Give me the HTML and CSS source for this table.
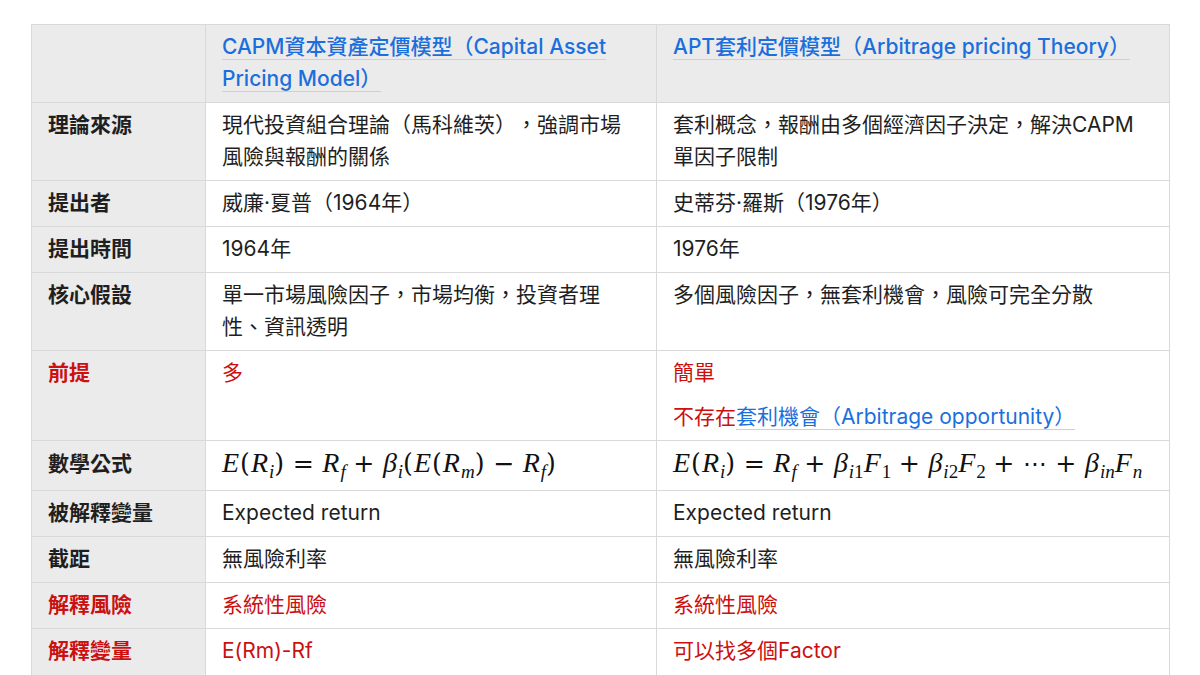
FILE: index.html
```html
<!DOCTYPE html>
<html lang="zh-Hant">
<head>
<meta charset="utf-8">
<title>CAPM vs APT</title>
<link rel="stylesheet" href="styles.css">
</head>
<body>
<div class="page">
<table class="cmp">
  <colgroup>
    <col class="c1"><col class="c2"><col class="c3">
  </colgroup>
  <thead>
    <tr>
      <th></th>
      <th><a class="lnk">CAPM資本資產定價模型（Capital Asset Pricing Model）</a></th>
      <th><a class="lnk">APT套利定價模型（Arbitrage pricing Theory）</a></th>
    </tr>
  </thead>
  <tbody>
    <tr>
      <th>理論來源</th>
      <td>現代投資組合理論（馬科維茨），強調市場風險與報酬的關係</td>
      <td>套利概念，報酬由多個經濟因子決定，解決CAPM單因子限制</td>
    </tr>
    <tr>
      <th>提出者</th>
      <td>威廉·夏普（1964年）</td>
      <td>史蒂芬·羅斯（1976年）</td>
    </tr>
    <tr>
      <th>提出時間</th>
      <td>1964年</td>
      <td>1976年</td>
    </tr>
    <tr>
      <th>核心假設</th>
      <td>單一市場風險因子，市場均衡，投資者理性、資訊透明</td>
      <td>多個風險因子，無套利機會，風險可完全分散</td>
    </tr>
    <tr>
      <th class="red">前提</th>
      <td class="red">多</td>
      <td>
        <p class="red">簡單</p>
        <p><span class="red">不存在</span><a class="lnk">套利機會（Arbitrage opportunity）</a></p>
      </td>
    </tr>
    <tr class="mrow">
      <th>數學公式</th>
      <td class="math"><i>E</i><span class="p">(</span><i>R</i><sub><i>i</i></sub><span class="p">)</span><span class="op">=</span><i>R</i><sub><i>f</i></sub><span class="op">+</span><i>β</i><sub><i>i</i></sub><span class="p">(</span><i>E</i><span class="p">(</span><i>R</i><sub><i>m</i></sub><span class="p">)</span><span class="op">−</span><i>R</i><sub><i>f</i></sub><span class="p">)</span></td>
      <td class="math"><i>E</i><span class="p">(</span><i>R</i><sub><i>i</i></sub><span class="p">)</span><span class="op">=</span><i>R</i><sub><i>f</i></sub><span class="op">+</span><i>β</i><sub><i>i</i>1</sub><i>F</i><sub>1</sub><span class="op">+</span><i>β</i><sub><i>i</i>2</sub><i>F</i><sub>2</sub><span class="op">+</span><span class="dots">⋯</span><span class="op">+</span><i>β</i><sub><i>in</i></sub><i>F</i><sub><i>n</i></sub></td>
    </tr>
    <tr>
      <th>被解釋變量</th>
      <td>Expected return</td>
      <td>Expected return</td>
    </tr>
    <tr>
      <th>截距</th>
      <td>無風險利率</td>
      <td>無風險利率</td>
    </tr>
    <tr>
      <th class="red">解釋風險</th>
      <td class="red">系統性風險</td>
      <td class="red">系統性風險</td>
    </tr>
    <tr class="last">
      <th class="red">解釋變量</th>
      <td class="red">E(Rm)-Rf</td>
      <td class="red">可以找多個Factor</td>
    </tr>
  </tbody>
</table>
</div>
</body>
</html>
```

FILE: styles.css
```css
html, body {
  margin: 0;
  padding: 0;
  background: #ffffff;
}

.page {
  padding: 24px 0 0 31px;
}

.cmp {
  border-collapse: collapse;
  table-layout: fixed;
  width: 1138px;
  font-family: Inter, "Noto Sans CJK TC", sans-serif;
  font-size: 21px;
  line-height: 32px;
  color: #1f1f1f;
  text-spacing-trim: space-all;
}

.c1 { width: 174px; }
.c2 { width: 451px; }
.c3 { width: 513px; }

.cmp th,
.cmp td {
  border: 1px solid #d9d9d9;
  padding: 6px 18px 7px 16px;
  vertical-align: top;
  text-align: left;
}

.cmp td:last-child,
.cmp thead th:last-child {
  padding-right: 24px;
}

.cmp thead th {
  background: #ebebeb;
  font-weight: 500;
}

.cmp tbody th {
  background: #ebebeb;
  font-weight: 700;
}

.cmp td {
  background: #ffffff;
  font-weight: 400;
}

.cmp p {
  margin: 0;
}

.cmp p + p {
  margin-top: 12px;
}

.lnk {
  color: #1b6fdc;
  text-decoration: none;
  border-bottom: 1px solid #cfcfcf;
}

.red {
  color: #cc1010;
}

.cmp tbody th.red {
  color: #cc1010;
}

.cmp .last th,
.cmp .last td {
  padding-bottom: 16px;
}

.mrow th {
  padding-top: 7px;
  padding-bottom: 9px;
}

.cmp td.math {
  font-family: "Liberation Serif", "DejaVu Serif", serif;
  font-size: 28px;
  letter-spacing: 0.035em;
  color: #111;
  white-space: nowrap;
  padding-top: 6px;
  padding-bottom: 10px;
  padding-right: 0;
}

.math i {
  font-style: italic;
}

.math .p {
  font-family: "DejaVu Serif", serif;
  font-size: 0.9em;
  font-weight: 300;
}

.math sub {
  font-size: 0.68em;
  line-height: 0;
  vertical-align: -0.3em;
  letter-spacing: 0;
}

.math .op {
  font-family: "DejaVu Sans", sans-serif;
  font-size: 0.9em;
  margin: 0 0.3em;
}

.math .dots {
  font-family: "DejaVu Sans", sans-serif;
  font-size: 0.85em;
}
```
